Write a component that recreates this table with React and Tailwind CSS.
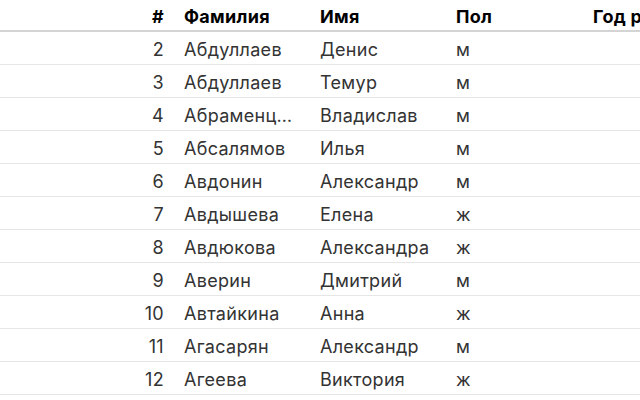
const rows = [
  [2, "Абдуллаев", "Денис", "м"],
  [3, "Абдуллаев", "Темур", "м"],
  [4, "Абраменцева", "Владислав", "м"],
  [5, "Абсалямов", "Илья", "м"],
  [6, "Авдонин", "Александр", "м"],
  [7, "Авдышева", "Елена", "ж"],
  [8, "Авдюкова", "Александра", "ж"],
  [9, "Аверин", "Дмитрий", "м"],
  [10, "Автайкина", "Анна", "ж"],
  [11, "Агасарян", "Александр", "м"],
  [12, "Агеева", "Виктория", "ж"],
];

const cols = "grid grid-cols-[124px_50px_136px_136px_137px_137px] w-[720px]";

export default function App() {
  return (
    <div className="w-[640px] h-[400px] overflow-hidden bg-white text-[18px] tracking-[0.3px] font-['Inter','Liberation_Sans',sans-serif]">
      <div className={`${cols} h-[32px] items-center pt-[3px] border-b-2 border-[#d4d4d4] font-bold text-black`}>
        <div />
        <div className="text-right pr-[10px]">#</div>
        <div className="px-[10px]">Фамилия</div>
        <div className="px-[10px]">Имя</div>
        <div className="px-[10px]">Пол</div>
        <div className="px-[10px] whitespace-nowrap">Год рождения</div>
      </div>
      {rows.map(([n, last, first, sex]) => (
        <div key={n} className={`${cols} h-[33px] items-center pt-[2px] border-b border-[#e6e6e6] text-[#333]`}>
          <div />
          <div className="text-right pr-[10px]">{n}</div>
          <div className="px-[10px] truncate">{last}</div>
          <div className="px-[10px] truncate">{first}</div>
          <div className="px-[10px]">{sex}</div>
          <div className="px-[10px]" />
        </div>
      ))}
    </div>
  );
}
